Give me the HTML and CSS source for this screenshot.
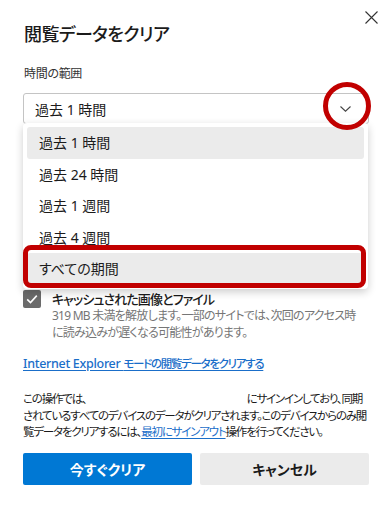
FILE: index.html
```html
<!DOCTYPE html>
<html lang="ja">
<head>
    <meta charset="UTF-8">
    <meta name="viewport" content="width=device-width, initial-scale=1.0">
    <title>閲覧データをクリア</title>
    <link rel="stylesheet" href="styles.css">
</head>
<body>
    <div class="dialog">
        <div class="head">
            <h1>閲覧データをクリア</h1>
            <button class="close" aria-label="閉じる">
                <svg width="13" height="13" viewBox="0 0 13 13"><path d="M0.5 0.5L12.5 12.5M12.5 0.5L0.5 12.5" stroke="#333" stroke-width="1.1" fill="none"/></svg>
            </button>
        </div>

        <div class="label">時間の範囲</div>
        <div class="select">
            <span>過去 1 時間</span>
            <svg class="chevron" width="11" height="6" viewBox="0 0 11 6"><path d="M0.5 0.5L5.5 5.2L10.5 0.5" stroke="#444" stroke-width="1.1" fill="none"/></svg>
        </div>

        <!-- 開いたドロップダウン -->
        <ul class="menu">
            <li class="item hover">過去 1 時間</li>
            <li class="item">過去 24 時間</li>
            <li class="item">過去 1 週間</li>
            <li class="item">過去 4 週間</li>
            <li class="item picked">すべての期間</li>
        </ul>
        <div class="mark-circle"></div>
        <div class="mark-box"></div>

        <div class="options">
            <div class="option">
                <svg class="check" width="18" height="18" viewBox="0 0 18 18"><rect width="18" height="18" rx="2" fill="#6b6b6b"/><path d="M4.2 9.4L7.5 12.5L13.8 5.6" stroke="#fff" stroke-width="1.6" fill="none"/></svg>
                <div>
                    <div class="opt-title">キャッシュされた画像とファイル</div>
                    <div class="opt-desc">319 MB 未満を解放します。一部のサイトでは、次回のアクセス時<br>に読み込みが遅くなる可能性があります。</div>
                </div>
            </div>
        </div>

        <a class="ie-link" href="#">Internet Explorer <span class="jp">モードの閲覧データをクリアする</span></a>

        <p class="note">この操作では、<span class="blank"></span>にサインインしており、同期<br>されているすべてのデバイスのデータがクリアされます。このデバイスからのみ閲<br>覧データをクリアするには、<a href="#">最初にサインアウト</a>操作を行ってください。</p>

        <div class="buttons">
            <button class="btn primary">今すぐクリア</button>
            <button class="btn">キャンセル</button>
        </div>
    </div>
</body>
</html>
```

FILE: styles.css
```css
body {
    margin: 0;
    background-color: white;
    font-family: "Noto Sans", "Noto Sans CJK JP", sans-serif;
    font-feature-settings: "palt";
    color: #1b1b1b;
}
.dialog {
    position: relative;
    padding: 0 21px 0 23px;
}
.head {
    display: flex;
    justify-content: space-between;
    align-items: flex-start;
}
h1 {
    margin: 21px 0 0 1px;
    font-size: 18px;
    line-height: 26px;
    font-weight: 500;
    letter-spacing: -0.6px;
}
.close {
    margin: 11px -9px 0 0;
    padding: 0;
    border: none;
    background: none;
    width: 13px;
    height: 13px;
}
.close svg {
    display: block;
}
.label {
    margin-top: 19px;
    font-size: 12px;
    line-height: 16px;
    color: #333;
    padding-left: 1px;
    letter-spacing: -0.3px;
}
.select {
    margin-top: 11px;
    height: 29px;
    border: 1px solid #c4c4c4;
    border-radius: 3px;
    display: flex;
    align-items: center;
    justify-content: space-between;
    padding: 0 17px 0 11px;
    font-size: 14px;
}
.chevron {
    display: block;
}
.menu {
    position: absolute;
    top: 123px;
    left: 23px;
    width: 345px;
    margin: 0;
    padding: 4px;
    box-sizing: border-box;
    list-style: none;
    background: white;
    border-radius: 4px;
    box-shadow: 0 3px 9px rgba(0, 0, 0, 0.2);
}
.item {
    height: 31.5px;
    line-height: 31.5px;
    padding-left: 12px;
    font-size: 14px;
    border-radius: 3px;
    color: #1b1b1b;
}
.item.hover, .item.picked {
    background-color: #ebebeb;
}
.mark-circle {
    position: absolute;
    left: 323px;
    top: 82px;
    width: 38px;
    height: 38px;
    border: 5px solid #c10000;
    border-radius: 50%;
}
.mark-box {
    position: absolute;
    left: 23px;
    top: 245px;
    width: 333px;
    height: 33px;
    border: 5px solid #c10000;
    border-radius: 8px;
}
.options {
    margin-top: 166px;
}
.option {
    display: flex;
    gap: 11px;
}
.check {
    flex: none;
    display: block;
}
.opt-title {
    font-size: 13px;
    line-height: 18px;
    font-weight: 500;
    letter-spacing: -0.9px;
}
.opt-desc {
    font-size: 12px;
    line-height: 16.5px;
    color: #767676;
    letter-spacing: -0.75px;
    white-space: nowrap;
}
.ie-link {
    display: inline-block;
    margin-top: 14px;
    font-size: 12.5px;
    line-height: 18px;
    font-weight: 500;
    color: #1a6ec9;
    letter-spacing: -0.3px;
    text-decoration: underline;
    text-underline-offset: 2px;
}
.ie-link .jp {
    font-size: 11.5px;
    letter-spacing: -1.3px;
}
.note {
    margin: 18px 0 0;
    font-size: 11.5px;
    line-height: 16.5px;
    color: #1b1b1b;
    letter-spacing: -1.2px;
    white-space: nowrap;
}
.note a {
    color: #1a6ec9;
    text-decoration: underline;
    text-underline-offset: 2px;
}
.blank {
    display: inline-block;
    width: 160px;
}
.buttons {
    display: grid;
    grid-template-columns: 1fr 1fr;
    gap: 8px;
    margin-top: 12px;
}
.btn {
    height: 32px;
    border: none;
    border-radius: 2px;
    background-color: #ebebeb;
    color: #1b1b1b;
    font-family: inherit;
    font-feature-settings: "palt";
    font-size: 14px;
    font-weight: 700;
}
.btn.primary {
    background-color: #0078d4;
    color: white;
}
```
